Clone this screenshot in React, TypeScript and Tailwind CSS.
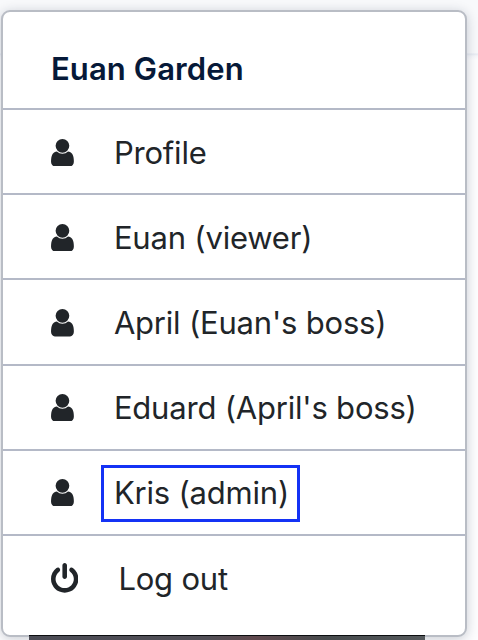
const USER =
  'M1280 1399q0 109-62.5 187t-150.5 78h-854q-88 0-150.5-78t-62.5-187q0-85 8.5-160.5t31.5-152 58.5-131 94-89 134.5-34.5q131 128 313 128t313-128q76 0 134.5 34.5t94 89 58.5 131 31.5 152 8.5 160.5zm-256-887q0 159-112.5 271.5t-271.5 112.5-271.5-112.5-112.5-271.5 112.5-271.5 271.5-112.5 271.5 112.5 112.5 271.5z';
const POWER =
  'M1664 896q0 156-61 298t-164 245-245 164-298 61-298-61-245-164-164-245-61-298q0-182 80.5-343t226.5-270q43-32 95.5-25t83.5 50q32 42 24.5 94.5t-49.5 84.5q-98 74-151.5 181t-53.5 228q0 104 40.5 198.5t109.5 163.5 163.5 109.5 198.5 40.5 198.5-40.5 163.5-109.5 109.5-163.5 40.5-198.5q0-121-53.5-228t-151.5-181q-42-32-49.5-84.5t24.5-94.5q31-43 84-50t95 25q146 109 226.5 270t80.5 343zm-640-768v640q0 52-38 90t-90 38-90-38-38-90v-640q0-52 38-90t90-38 90 38 38 90z';

const rows = [
  { label: 'Profile', size: 'h-[85px] pt-[2px]', text: 'mt-[2px]' },
  { label: 'Euan (viewer)', size: 'h-[85px] pt-[2px]', text: 'mt-[2px]' },
  { label: "April (Euan's boss)", size: 'h-[86px] pt-[2px]', text: '' },
  { label: "Eduard (April's boss)", size: 'h-[85px]', text: 'mt-[2px]' },
  { label: 'Kris (admin)', size: 'h-[85px]', text: 'mt-[1px]', highlighted: true },
];

export default function App() {
  return (
    <div className="relative h-[640px] w-[478px] overflow-hidden bg-[linear-gradient(#f8f9fb_0_53px,#e7eaf2_54px,#f6f7fa_56px,#fdfdfe_60px)] pl-px pt-2.5 font-['Inter','Liberation_Sans',sans-serif] text-[31px] text-[#212529]">
      <div className="flex h-[627px] w-[466px] flex-col rounded-[9px] border-2 border-[#b9bdc5] bg-white shadow-[0_2px_12px_rgba(20,30,60,0.22)]">
        <h1 className="flex h-[98px] shrink-0 items-center border-b-2 border-[#b4b9c7] pl-12 pt-[18px] font-semibold tracking-[0.1px] text-[#061938]">
          Euan Garden
        </h1>
        {rows.map((row) => (
          <div
            key={row.label}
            className={`flex shrink-0 items-center border-b-2 border-[#b4b9c7] pl-12 tracking-[-0.2px] ${row.size}`}
          >
            <svg viewBox="0 128 1280 1536" className="h-[27.4px] w-[22.9px] shrink-0 fill-current">
              <path d={USER} />
            </svg>
            <span
              className={`ml-[27px] flex h-[57px] items-center whitespace-nowrap border-[3px] pl-2.5 ${row.text} ${
                row.highlighted ? 'w-[199px] border-[#1432f5]' : 'border-transparent'
              }`}
            >
              {row.label}
            </span>
          </div>
        ))}
        <div className="flex h-[88px] items-center pb-[2px] pl-12 tracking-[-0.2px]">
          <svg viewBox="128 0 1536 1664" className="mb-[2px] h-[29.7px] w-[27.4px] shrink-0 fill-current">
            <path d={POWER} />
          </svg>
          <span className="ml-10">Log out</span>
        </div>
      </div>
      <div className="absolute left-[29px] top-[635px] h-[5px] w-[396px] border-t border-[#0c0e10] bg-[linear-gradient(90deg,#4b4c55,#514f56_45%,#60494e_57%,#474b4d_75%,#55595c)]" />
    </div>
  );
}
